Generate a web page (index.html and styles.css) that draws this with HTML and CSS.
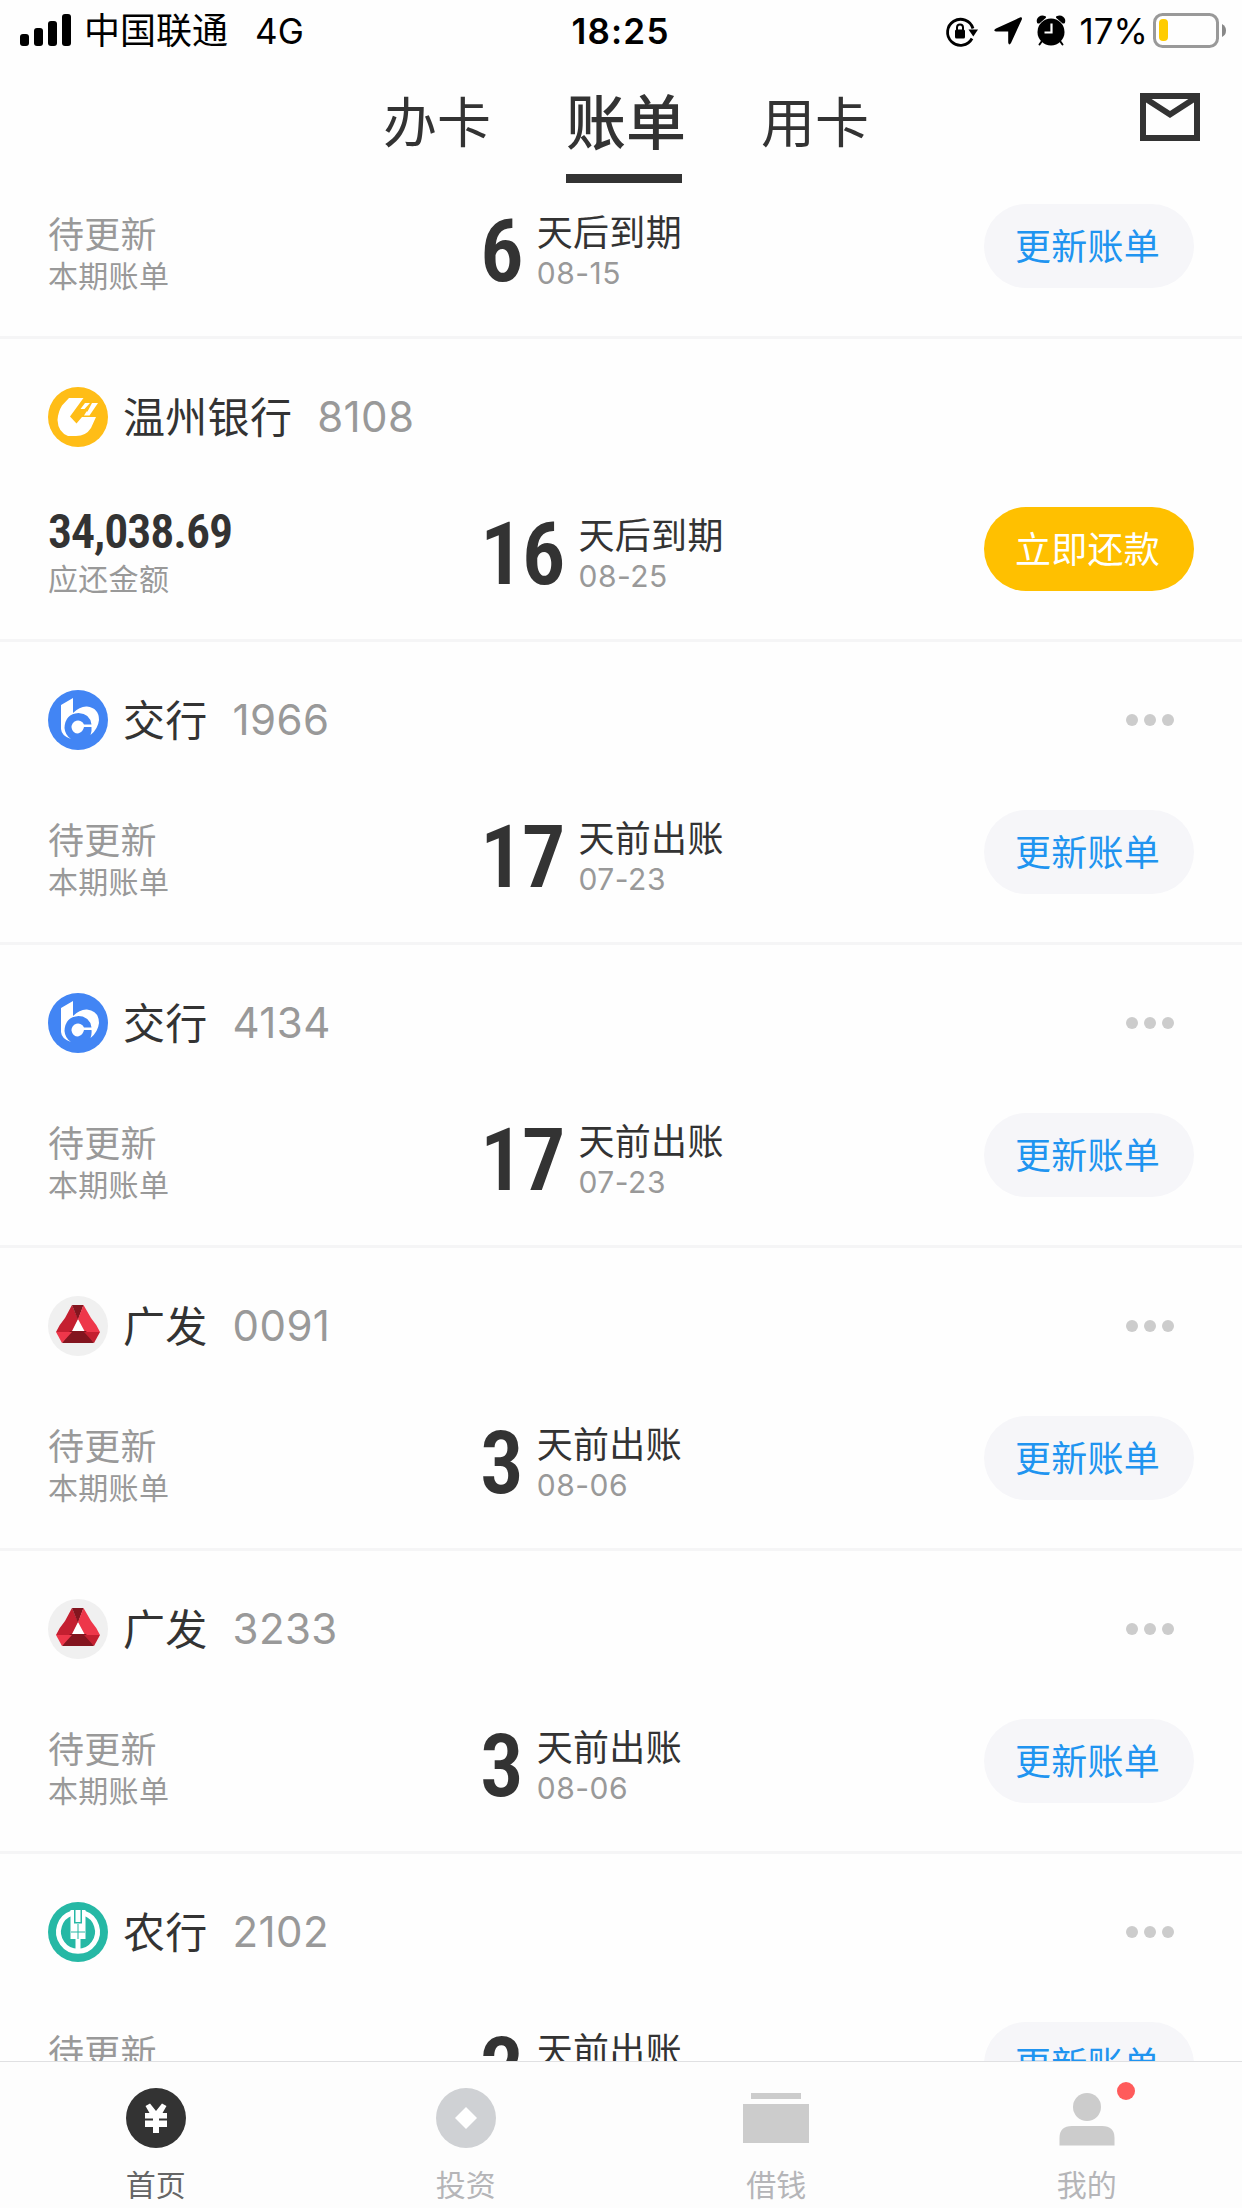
FILE: index.html
```html
<!DOCTYPE html>
<html lang="zh-CN">
<head>
<meta charset="utf-8">
<title>账单</title>
<link rel="stylesheet" href="styles.css">
</head>
<body>
<svg class="defs" aria-hidden="true">
  <symbol id="logo-wz" viewBox="0 0 60 60">
    <circle cx="30" cy="30" r="30" fill="#ffbd17"/>
    <path d="M21 11H35.500L22 29.500L28.500 36.500L34 30H48L43 41Q38 49 28 49H20Q10 45 9.500 33Q10 25 14 18.500Z" fill="#fff"/>
    <path d="M37 16H42L36.500 22H32.500ZM44 16H50L41.500 28.500H36L38.500 24.500H39.500Z" fill="#fff"/>
  </symbol>
  <symbol id="logo-jt" viewBox="0 0 60 60">
    <circle cx="30" cy="30" r="30" fill="#4285f4"/>
    <path d="M13 15L25 8V23Q32 16 39 16.500Q51 18 51 30Q50 39 42.500 45Q44 41 43.500 37H36Q35 42 30 43.500A6.500 6.500 0 1 1 36 34.500H43.500Q42 23.500 30.500 23Q17 24 16.500 38Q17 45 23 49Q13.500 46 13 39Z" fill="#fff"/>
  </symbol>
  <symbol id="logo-gf" viewBox="0 0 60 60">
    <circle cx="30" cy="30" r="30" fill="#f0f0f0"/>
    <path d="M30 23L37 36H23Z" fill="#fff"/>
    <path d="M24 9L30 23L23.500 36H8Q11 29 17 22Z" fill="#c41f30"/>
    <path d="M24 9H35.500L30 24Z" fill="#83151f"/>
    <path d="M35.500 9L43 22Q49 29 52 36H37L30 23Z" fill="#ee374a"/>
    <path d="M22 35H38L46 47H14Z" fill="#83151f"/>
    <path d="M8 36H24L14 47Z" fill="#ee374a"/>
    <path d="M36 36H52L46 47Z" fill="#c41f30"/>
  </symbol>
  <symbol id="logo-ny" viewBox="0 0 60 60">
    <circle cx="30" cy="30" r="30" fill="#26b8a5"/>
    <path d="M24 11.200A19.500 19.500 0 1 0 36 11.200" fill="none" stroke="#fff" stroke-width="5"/>
    <path d="M22.500 8H26V21.500H34V8H37.500V37H32.500V50H27.500V37H22.500Z" fill="#fff"/>
    <path d="M27.500 8H32.500V20H27.500Z" fill="#fff"/>
    <path d="M30 22V37M23 30H37" stroke="#26b8a5" stroke-width="1"/>
  </symbol>
</svg>

<header class="top">
  <div class="status">
    <div class="status-left">
      <svg class="signal" width="52" height="34" viewBox="0 0 52 34"><rect x="0" y="20" width="9" height="12" rx="3"/><rect x="14" y="14" width="9" height="18" rx="3"/><rect x="28" y="7" width="9" height="25" rx="3"/><rect x="42" y="0" width="9" height="32" rx="3"/></svg>
      <span class="carrier">中国联通</span><span class="net">4G</span>
    </div>
    <span class="clock">18:25</span>
    <div class="status-right">
      <svg class="icons" width="122" height="34" viewBox="0 0 122 34">
        <path d="M27 24.500A13 13 0 1 1 28 14.500" fill="none" stroke="#000" stroke-width="2.800"/>
        <path d="M23.500 15.500H33L28.300 22.500Z"/><rect x="10" y="15.500" width="10" height="9" rx="1.500"/>
        <path d="M12 16V13.500A3 3 0 0 1 18 13.500V16" fill="none" stroke="#000" stroke-width="2"/>
        <path d="M75.500 3.300Q77.500 3 76.800 5.500L66 29Q64 32 63.200 28.500V17.500H51Q47.500 16.500 51 14.500Z"/>
        <circle cx="106" cy="18" r="13.500"/>
        <path d="M93 8.500Q92 5.500 94.500 3.500T100 3.200L94 8.500ZM119 8.500Q120 5.500 117.500 3.500T112 3.200L118 8.500ZM97 27L94.500 30.500M115 27L117.500 30.500" stroke="#000" stroke-width="2" stroke-linejoin="round" stroke-linecap="round"/>
        <path d="M106.500 9.500V18.500H99.500" fill="none" stroke="#fff" stroke-width="2.200"/>
      </svg>
      <span class="percent">17%</span>
      <svg class="battery" width="74" height="36" viewBox="0 0 74 36"><rect x="1.500" y="1.500" width="63" height="32" rx="8" fill="none" stroke="#999" stroke-width="3"/><rect x="6" y="6" width="9" height="22" rx="4" fill="#fc0"/><path d="M69 11Q73 13 73 17.500T69 24Z" fill="#888"/></svg>
    </div>
  </div>
  <nav class="tabs">
    <span class="tab tab-left">办卡</span>
    <span class="tab tab-active">账单</span>
    <span class="tab tab-right">用卡</span>
    <svg class="mail" width="60" height="48" viewBox="0 0 60 48"><path d="M3 3H57V45H3ZM3 4L30 21.500L57 4" fill="none" stroke="#333" stroke-width="6"/></svg>
  </nav>
</header>

<main class="list">
  <section class="bill">
    <div class="body">
      <div class="amount"><p class="pending">待更新</p><p class="caption">本期账单</p></div>
      <div class="due"><span class="days">6</span><div><p class="when">天后到期</p><p class="date">08-15</p></div></div>
      <button class="btn">更新账单</button>
    </div>
  </section>
  <section class="bill full">
    <div class="head"><svg class="logo"><use href="#logo-wz"/></svg><span class="name">温州银行</span><span class="card">8108</span></div>
    <div class="body">
      <div class="amount"><p class="money">34,038.69</p><p class="caption">应还金额</p></div>
      <div class="due"><span class="days">16</span><div><p class="when">天后到期</p><p class="date">08-25</p></div></div>
      <button class="btn pay">立即还款</button>
    </div>
  </section>
  <section class="bill full">
    <div class="head"><svg class="logo"><use href="#logo-jt"/></svg><span class="name">交行</span><span class="card">1966</span><span class="more"><i></i><i></i><i></i></span></div>
    <div class="body">
      <div class="amount"><p class="pending">待更新</p><p class="caption">本期账单</p></div>
      <div class="due"><span class="days">17</span><div><p class="when">天前出账</p><p class="date">07-23</p></div></div>
      <button class="btn">更新账单</button>
    </div>
  </section>
  <section class="bill full">
    <div class="head"><svg class="logo"><use href="#logo-jt"/></svg><span class="name">交行</span><span class="card">4134</span><span class="more"><i></i><i></i><i></i></span></div>
    <div class="body">
      <div class="amount"><p class="pending">待更新</p><p class="caption">本期账单</p></div>
      <div class="due"><span class="days">17</span><div><p class="when">天前出账</p><p class="date">07-23</p></div></div>
      <button class="btn">更新账单</button>
    </div>
  </section>
  <section class="bill full">
    <div class="head"><svg class="logo"><use href="#logo-gf"/></svg><span class="name">广发</span><span class="card">0091</span><span class="more"><i></i><i></i><i></i></span></div>
    <div class="body">
      <div class="amount"><p class="pending">待更新</p><p class="caption">本期账单</p></div>
      <div class="due"><span class="days">3</span><div><p class="when">天前出账</p><p class="date">08-06</p></div></div>
      <button class="btn">更新账单</button>
    </div>
  </section>
  <section class="bill full">
    <div class="head"><svg class="logo"><use href="#logo-gf"/></svg><span class="name">广发</span><span class="card">3233</span><span class="more"><i></i><i></i><i></i></span></div>
    <div class="body">
      <div class="amount"><p class="pending">待更新</p><p class="caption">本期账单</p></div>
      <div class="due"><span class="days">3</span><div><p class="when">天前出账</p><p class="date">08-06</p></div></div>
      <button class="btn">更新账单</button>
    </div>
  </section>
  <section class="bill full">
    <div class="head"><svg class="logo"><use href="#logo-ny"/></svg><span class="name">农行</span><span class="card">2102</span><span class="more"><i></i><i></i><i></i></span></div>
    <div class="body">
      <div class="amount"><p class="pending">待更新</p></div>
      <div class="due"><span class="days">2</span><div><p class="when">天前出账</p></div></div>
      <button class="btn">更新账单</button>
    </div>
  </section>
</main>

<footer class="tabbar">
  <a class="item on"><svg width="60" height="60" viewBox="0 0 60 60"><circle cx="30" cy="30" r="30" fill="#333"/><path d="M19.500 18L24 15.500L30 23L36 15.500L40.500 18L36.500 25H41V30.500H33V32.500H41V39H33V45H27V39H19V32.500H27V30.500H19V25H23.500Z" fill="#fff"/></svg><span>首页</span></a>
  <a class="item"><svg width="60" height="60" viewBox="0 0 60 60"><circle cx="30" cy="30" r="30" fill="#cfd1d4"/><path d="M30 19L41 30L30 41L19 30Z" fill="#fff"/></svg><span>投资</span></a>
  <a class="item"><svg width="66" height="60" viewBox="0 0 66 60"><path d="M8 5H58V11H8ZM0 16H66V55H0Z" fill="#ccc"/></svg><span>借钱</span></a>
  <a class="item"><svg width="60" height="60" viewBox="0 0 60 60"><circle cx="30" cy="19" r="14" fill="#ccc"/><path d="M2.500 57.500V50Q2.500 38 15 38H45Q57.500 38 57.500 50V57.500Z" fill="#ccc"/></svg><b class="badge"></b><span>我的</span></a>
</footer>
</body>
</html>
```
FILE: styles.css
```css
* { box-sizing: border-box; margin: 0; padding: 0; }
body {
  width: 1242px;
  height: 2208px;
  overflow: hidden;
  display: flex;
  flex-direction: column;
  background: #fefefe;
  color: #333;
  font-family: Inter, "Noto Sans CJK SC", sans-serif;
}
.defs { position: absolute; width: 0; height: 0; }

.top { height: 184px; flex: none; }
.status {
  height: 62px;
  display: grid;
  grid-template-columns: 1fr auto 1fr;
  align-items: center;
  padding: 0 15px 0 20px;
  color: #000;
  font-size: 35px;
  line-height: 62px;
}
.status-left, .status-right { display: flex; align-items: center; }
.status-right { justify-content: flex-end; }
.signal { margin-right: 12px; }
.carrier { font-size: 36px; }
.net { margin-left: 27px; }
.clock { font-size: 35px; font-weight: 600; letter-spacing: 1.2px; margin-right: 6px; }
.percent { margin: 0 5px 0 13px; letter-spacing: 0; }

.tabs { height: 122px; display: grid; grid-template-columns: 383px 183px 195px 1fr auto; }
.tab { height: 121px; font-size: 54px; line-height: 124px; }
.tab-left { grid-column: 2; }
.tab-active {
  width: 116px;
  font-size: 60px;
  font-weight: 500;
  border-bottom: 9px solid #333;
  line-height: 123px;
  white-space: nowrap;
}
.mail { margin: 31px 42px 0 0; }

.list { flex: 1; min-height: 0; overflow: hidden; padding-top: 20px; }
.bill { padding: 0 48px 48px; border-bottom: 3px solid #f5f5f6; }
.full { padding-top: 48px; }
.head { height: 60px; display: flex; align-items: center; margin-bottom: 60px; font-size: 42px; line-height: 60px; }
.logo { width: 60px; height: 60px; margin-right: 15px; }
.name { padding-top: 2px; letter-spacing: .3px; }
.card { margin-left: 25px; color: #999; letter-spacing: .4px; }
.more { display: flex; gap: 6px; margin-left: auto; margin-right: 20px; }
.more i { width: 12px; height: 12px; border-radius: 50%; background: #ccc; }
.body { height: 84px; display: grid; grid-template-columns: 432px 1fr 210px; }
.pending, .when { font-size: 36px; line-height: 56px; padding-top: 1px; }
.pending { color: #999; padding-top: 3px; letter-spacing: .3px; }
.when { margin-left: -1px; letter-spacing: .3px; }
.caption { font-size: 30px; line-height: 26px; color: #999; letter-spacing: .3px; }
.money {
  height: 59px;
  font: 600 48px/50px Roboto, sans-serif;
  font-stretch: 82%;
  letter-spacing: -1.1px;
}
.due { display: flex; gap: 16px; }
.days {
  font: 600 87px/94px Roboto, sans-serif;
  font-stretch: 86%;
  letter-spacing: -2px;
}
.date { font-size: 30px; line-height: 25px; color: #999; margin-left: -1px; letter-spacing: .5px; }
.btn {
  height: 84px;
  padding-right: 3px;
  border: 0;
  border-radius: 42px;
  background: #f6f6f9;
  color: #2094f0;
  font: 36px/86px Inter, "Noto Sans CJK SC", sans-serif;
  letter-spacing: .3px;
}
.pay { background: #ffc000; color: #fff; }

.tabbar {
  height: 147px;
  flex: none;
  display: grid;
  grid-template-columns: repeat(4, 1fr);
  border-top: 1px solid #e0e0e2;
  background: #fdfdfd;
}
.item {
  position: relative;
  display: flex;
  flex-direction: column;
  align-items: center;
  padding-top: 26px;
  gap: 21px;
  font-size: 30px;
  line-height: 32px;
  color: #b5b5b8;
}
.on { color: #666; padding-left: 1px; }
.badge {
  position: absolute;
  left: 185px;
  top: 20px;
  width: 18px;
  height: 18px;
  border-radius: 50%;
  background: #ff5b5b;
}
```
